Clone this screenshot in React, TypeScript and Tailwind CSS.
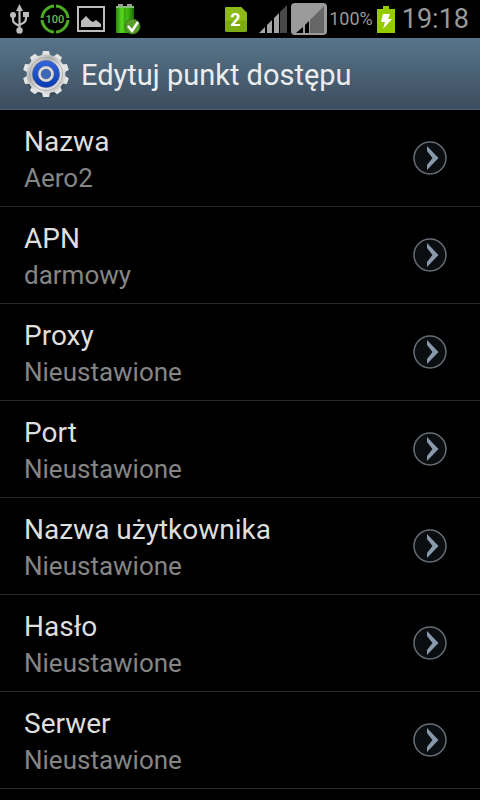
type Setting = {
  label: string;
  value: string;
};

const settings: Setting[] = [
  { label: "Nazwa", value: "Aero2" },
  { label: "APN", value: "darmowy" },
  { label: "Proxy", value: "Nieustawione" },
  { label: "Port", value: "Nieustawione" },
  { label: "Nazwa użytkownika", value: "Nieustawione" },
  { label: "Hasło", value: "Nieustawione" },
  { label: "Serwer", value: "Nieustawione" },
];

function UsbIcon() {
  return (
    <svg width="20" height="30" viewBox="0 0 20 30" fill="none" aria-hidden="true">
      <path d="M9.500 5v21M3 12v4c0 3 2 3.500 6.500 6M16 10v4c0 4-2 4.500-6.500 7" stroke="#bcbcbc" strokeWidth="2.200" />
      <path d="M9.500 0l3.500 7H6z" fill="#bcbcbc" />
      <circle cx="3" cy="11" r="3" fill="#bcbcbc" />
      <path d="M13 8h6v5h-6z" fill="#bcbcbc" />
      <circle cx="9.500" cy="26.500" r="3.200" fill="#bcbcbc" />
    </svg>
  );
}

function BatteryLevelIcon() {
  return (
    <svg width="30" height="30" viewBox="0 0 30 30" fill="none" aria-hidden="true">
      <circle cx="15" cy="15" r="13" stroke="#4dab22" strokeWidth="3" />
      <path d="M15 0v5M15 25v5M0 15h5M25 15h5" stroke="#000" strokeWidth="2" />
      <text x="15" y="19" textAnchor="middle" fontSize="11" fontWeight="500" fill="#6dbd4c">
        100
      </text>
    </svg>
  );
}

function PictureIcon() {
  return (
    <svg width="28" height="26" viewBox="0 0 28 26" fill="none" aria-hidden="true">
      <path d="M1 1h26v24H1z" stroke="#bcbcbc" strokeWidth="2" />
      <path d="M4 21v-6l5-5 5 5 2 1 3-2 5 4v3z" fill="#bcbcbc" />
    </svg>
  );
}

function BatteryCheckIcon() {
  return (
    <svg width="26" height="31" viewBox="0 0 26 31" fill="none" aria-hidden="true">
      <defs>
        <linearGradient id="cell" x1="0" x2="1" y1="0" y2="0">
          <stop offset="0" stopColor="#248a08" />
          <stop offset=".3" stopColor="#56d41c" />
          <stop offset=".7" stopColor="#3aae0e" />
          <stop offset="1" stopColor="#1c6907" />
        </linearGradient>
      </defs>
      <path d="M3 0h5v3H3zM12 0h5v3h-5z" fill="#999" />
      <rect x="1" y="2" width="18" height="27" rx="1" fill="url(#cell)" />
      <path d="M1 2h18v2H1z" fill="#8bbf7c" />
      <path d="M10 4v25" stroke="#31950f" />
      <circle cx="17.500" cy="22.500" r="7.500" fill="#5a9c2c" stroke="#3c751a" />
      <path d="M13 22l4 5 6-9" stroke="#fff" strokeWidth="2.500" />
    </svg>
  );
}

function SimIcon() {
  return (
    <svg width="22" height="25" viewBox="0 0 22 25" aria-hidden="true">
      <path d="M1 0h15l6 6v18l-1 1H1l-1-1V1z" fill="#7dab12" />
      <path d="M1 0h15l6 6v8H0V1z" fill="#8dba18" />
      <text x="10.500" y="19" textAnchor="middle" fontSize="18" fontWeight="700" fill="#fff">
        2
      </text>
    </svg>
  );
}

function SignalIcon() {
  return (
    <svg width="28" height="28" viewBox="0 0 28 28" aria-hidden="true">
      <path d="M0 28l6-6v6zM8 20l5-5v13H8zM15 13l5-5v20h-5z" fill="#a5a5a5" />
      <path d="M21 7l7-7v28h-7z" fill="#484848" />
    </svg>
  );
}

function SecondSignalIcon() {
  return (
    <svg width="36" height="32" viewBox="0 0 36 32" aria-hidden="true">
      <rect width="36" height="32" rx="4" fill="#9b9b9b" />
      <path d="M19 30V17L33 3v27z" fill="#666" />
      <path d="M5 30l7-6v6zM14 22l4-4v12h-4z" fill="#000" />
    </svg>
  );
}

function ChargingIcon() {
  return (
    <svg width="18" height="27" viewBox="0 0 18 27" aria-hidden="true">
      <path d="M6 0h6v3h6v24H0V3h6z" fill="#96cb04" />
      <path d="M6 8h7l-2 5h4L6 23l2-7H4z" fill="#fff" />
    </svg>
  );
}

const teeth = [0, 36, 72, 108, 144, 180, 216, 252, 288, 324];

function GearIcon() {
  return (
    <svg width="46" height="48" viewBox="-23 -24 46 48" className="shrink-0" aria-hidden="true">
      <defs>
        <linearGradient id="metal" x1="0" x2="1" y1="0" y2="1">
          <stop offset="0" stopColor="#f2f2f2" />
          <stop offset=".35" stopColor="#b4b4b4" />
          <stop offset=".6" stopColor="#e6e6e6" />
          <stop offset="1" stopColor="#bdbdbd" />
        </linearGradient>
        <linearGradient id="disc" x1="0" x2="0" y1="0" y2="1">
          <stop offset="0" stopColor="#3467de" />
          <stop offset="1" stopColor="#0739b4" />
        </linearGradient>
      </defs>
      <ellipse cy="2" rx="20" ry="20" fill="#2c3a48" opacity=".5" />
      {teeth.map((angle) => (
        <path key={angle} d="M-4.500-17l1.500-6h6l1.500 6z" fill="#e4e4e4" transform={`rotate(${angle})`} />
      ))}
      <circle r="19.500" fill="url(#metal)" />
      <circle r="16.500" fill="none" stroke="#a4a4a4" strokeWidth=".8" />
      <circle r="13.500" fill="url(#disc)" stroke="#4a5f92" strokeWidth=".6" />
      <circle r="6.500" fill="#3d67b8" stroke="#6d7686" strokeWidth="3.600" />
      <circle r="6.500" fill="none" stroke="#dcdcdc" strokeWidth="2.400" />
    </svg>
  );
}

function ArrowIcon() {
  return (
    <svg width="34" height="34" viewBox="0 0 34 34" fill="none" className="shrink-0" aria-hidden="true">
      <circle cx="17" cy="17" r="16" fill="#0b0e11" stroke="#686e75" strokeWidth="1.500" />
      <path d="M14 5l11.500 12L14 29v-5l5.500-7L14 10z" fill="#8799ab" />
    </svg>
  );
}

function StatusBar() {
  return (
    <div className="flex h-[38px] items-center justify-between pl-2.5 pr-[11px] text-[#999]">
      <div className="flex items-center gap-2">
        <UsbIcon />
        <div className="flex items-center gap-[7px] pl-0.5">
          <BatteryLevelIcon />
          <PictureIcon />
        </div>
        <div className="pl-0.5">
          <BatteryCheckIcon />
        </div>
      </div>
      <div className="flex items-center">
        <SimIcon />
        <div className="flex items-center gap-1 pl-3">
          <SignalIcon />
          <SecondSignalIcon />
        </div>
        <span className="pl-0.5 pr-1 text-lg leading-6">100%</span>
        <ChargingIcon />
        <span className="pl-[7px] text-[27px] leading-8">19:18</span>
      </div>
    </div>
  );
}

function SettingRow({ label, value }: Setting) {
  return (
    <li className="border-b border-[#292929]">
      <button
        type="button"
        className="flex w-full items-center justify-between py-3 pr-[33px] pl-6 text-left"
      >
        <span className="min-w-0">
          <span className="block text-[28px] leading-10 text-[#dedede]">{label}</span>
          <span className="block text-[26px] leading-8 text-[#858585]">{value}</span>
        </span>
        <ArrowIcon />
      </button>
    </li>
  );
}

export default function App() {
  return (
    <div className="min-h-screen bg-black font-['Roboto',sans-serif]">
      <StatusBar />
      <header className="flex h-[72px] items-center gap-3 border-b border-[#4c6175] bg-linear-to-b from-[#58758b] to-[#3c4d5e] pl-[23px]">
        <GearIcon />
        <h1 className="pt-0.5 text-[29px] leading-9 text-[#ececec]">Edytuj punkt dostępu</h1>
      </header>
      <ul>
        {settings.map((setting) => (
          <SettingRow key={setting.label} {...setting} />
        ))}
      </ul>
    </div>
  );
}
